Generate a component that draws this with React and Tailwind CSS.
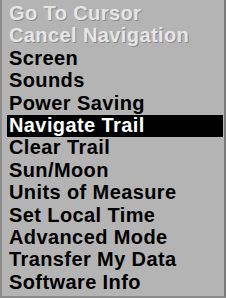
const ITEMS = [
  { label: 'Go To Cursor', disabled: true },
  { label: 'Cancel Navigation', disabled: true },
  { label: 'Screen' },
  { label: 'Sounds' },
  { label: 'Power Saving' },
  { label: 'Navigate Trail', active: true },
  { label: 'Clear Trail' },
  { label: 'Sun/Moon' },
  { label: 'Units of Measure' },
  { label: 'Set Local Time' },
  { label: 'Advanced Mode' },
  { label: 'Transfer My Data' },
  { label: 'Software Info' },
];

export default function App() {
  return (
    <div className="w-[226px] h-[298px] overflow-hidden bg-[#b4b4b4] border-l-2 border-l-[#8c8c8c] border-r-2 border-r-[#7a7a7a] border-b-2 border-b-[#8a8a8a] pt-[3px] pl-[5px] pr-[1px]">
      <ul className="flex flex-col" style={{ fontFamily: '"Liberation Sans", Arial, sans-serif' }}>
        {ITEMS.map(item => (
          <li
            key={item.label}
            className={`h-[22.4px] pl-[2px] text-[20px] font-bold leading-[21px] tracking-[0.4px] whitespace-nowrap ${
              item.active
                ? 'bg-black text-white'
                : item.disabled
                  ? 'text-[#e6e6e6] [text-shadow:1px_1px_0_#8a8a8a]'
                  : 'text-black'
            }`}
          >
            {item.label}
          </li>
        ))}
      </ul>
    </div>
  );
}
